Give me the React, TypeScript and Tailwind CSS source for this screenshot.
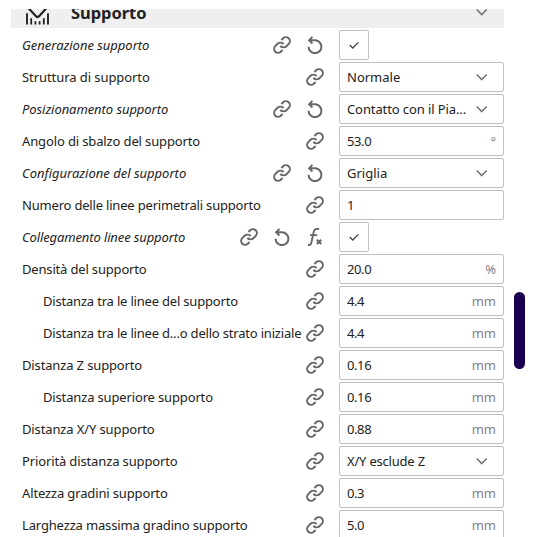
import React from "react";

function LinkIcon() {
  return (
    <svg className="h-[18px] w-[18px] shrink-0" viewBox="0.6 0.6 22.8 22.8" fill="none" stroke="#666" strokeWidth="2.5">
      <path d="M10 13a5 5 0 0 0 7.54.54l3-3a5 5 0 0 0-7.07-7.07l-2.2 2.2" />
      <path d="M14 11a5 5 0 0 0-7.54-.54l-3 3a5 5 0 0 0 7.07 7.07l2.2-2.2" />
    </svg>
  );
}

function ResetIcon() {
  return (
    <svg className="h-[18px] w-[18px] shrink-0" viewBox="0 0 18 18" fill="none" stroke="#666" strokeWidth="2">
      <path d="M2.6 10.7a6.4 6.4 0 1 0 6.4-6.4H3.6" />
      <path d="M6.4.9 3.2 4.2 6.4 7.5" />
    </svg>
  );
}

function FormulaIcon() {
  return (
    <svg className="h-[18px] w-[18px] shrink-0" viewBox="0 0 18 18" fill="none" stroke="#666" strokeWidth="1.9">
      <path d="M2 16.9c1.9.5 2.9-.3 3.4-2.4L7.8 3.6C8.3 1.4 9.8.4 13.2 1.1M4 7.1h7.3" />
      <path d="m10.9 11.7 4.3 4.3m0-4.3L10.9 16" strokeWidth="2.1" />
    </svg>
  );
}

function Chevron() {
  return (
    <svg className="h-[8px] w-[12px] shrink-0" viewBox="0 0 12 8" fill="none" stroke="#757575" strokeWidth="1.6">
      <path d="m.7 1.5 5 5 5-5" />
    </svg>
  );
}

type Row = {
  label: string;
  tracking: string;
  value?: string;
  valueTracking?: string;
  unit?: string;
  kind?: "select" | "check";
  changed?: boolean;
  formula?: boolean;
  child?: boolean;
};

const rows: Row[] = [
  { label: "Generazione supporto", tracking: "tracking-[-0.02px]", kind: "check", changed: true },
  { label: "Struttura di supporto", tracking: "tracking-[-0.07px]", kind: "select", value: "Normale" },
  { label: "Posizionamento supporto", tracking: "tracking-[-0.07px]", kind: "select", value: "Contatto con il Pia...", valueTracking: "tracking-[-0.1px]", changed: true },
  { label: "Angolo di sbalzo del supporto", tracking: "tracking-[-0.13px]", value: "53.0", valueTracking: "tracking-[-0.4px]", unit: "°" },
  { label: "Configurazione del supporto", tracking: "tracking-[0px]", kind: "select", value: "Griglia", changed: true },
  { label: "Numero delle linee perimetrali supporto", tracking: "tracking-[-0.19px]", value: "1" },
  { label: "Collegamento linee supporto", tracking: "tracking-[-0.12px]", kind: "check", changed: true, formula: true },
  { label: "Densità del supporto", tracking: "tracking-[-0.17px]", value: "20.0", valueTracking: "tracking-[-0.4px]", unit: "%" },
  { label: "Distanza tra le linee del supporto", tracking: "tracking-[-0.19px]", value: "4.4", valueTracking: "tracking-[-0.4px]", unit: "mm", child: true },
  { label: "Distanza tra le linee d...o dello strato iniziale", tracking: "tracking-[-0.19px]", value: "4.4", valueTracking: "tracking-[-0.4px]", unit: "mm", child: true },
  { label: "Distanza Z supporto", tracking: "tracking-[-0.14px]", value: "0.16", valueTracking: "tracking-[-0.4px]", unit: "mm" },
  { label: "Distanza superiore supporto", tracking: "tracking-[-0.15px]", value: "0.16", valueTracking: "tracking-[-0.4px]", unit: "mm", child: true },
  { label: "Distanza X/Y supporto", tracking: "tracking-[-0.12px]", value: "0.88", valueTracking: "tracking-[-0.4px]", unit: "mm" },
  { label: "Priorità distanza supporto", tracking: "tracking-[-0.13px]", kind: "select", value: "X/Y esclude Z", valueTracking: "tracking-[-0.2px]" },
  { label: "Altezza gradini supporto", tracking: "tracking-[-0.14px]", value: "0.3", valueTracking: "tracking-[-0.4px]", unit: "mm" },
  { label: "Larghezza massima gradino supporto", tracking: "tracking-[-0.15px]", value: "5.0", valueTracking: "tracking-[-0.4px]", unit: "mm" },
];

function Field({ row }: { row: Row }) {
  if (row.kind === "check") {
    return (
      <div className="flex h-[30px] w-[30px] items-center justify-center rounded-[2px] border border-[#c0c0c0]">
        <svg className="h-[8px] w-[10px]" viewBox="0 0 10 8" fill="none" stroke="#444" strokeWidth="1.3">
          <path d="m.7 4 3 3L9.3 1.4" />
        </svg>
      </div>
    );
  }
  return (
    <div className="flex h-[30px] w-[165px] items-center justify-between rounded-[2px] border border-[#c0c0c0] px-[7px]">
      <span className={row.valueTracking}>{row.value}</span>
      {row.kind === "select" ? (
        <span className="mr-[8px] flex">
          <Chevron />
        </span>
      ) : (
        <span className="text-[#7f7f8c]">{row.unit}</span>
      )}
    </div>
  );
}

export default function App() {
  return (
    <div className="flex h-[537px] w-[535px] overflow-hidden bg-white pl-[11px] pt-[9px] font-['Noto_Sans',sans-serif] text-[13px] leading-[18px] text-[#222]">
      <div className="w-[493px] shrink-0">
        <div className="flex h-[19px] items-end overflow-hidden bg-[#efefef]">
          <svg className="ml-[14px] h-[19px] w-[24px] shrink-0" viewBox="0 0 24 19" fill="none" stroke="#222" strokeWidth="2">
            <path d="M2 4.2v11.3M23 4.2v11.3" strokeWidth="1.9" />
            <path d="M3.2-1.2l8 8.6q1.3 1.2 2.6 0L21.8-1.2" strokeWidth="2.2" />
            <path d="M6.2 9.2v6.3M10.4 12.2v3.3M14.6 12.2v3.3M18.8 9.2v6.3" strokeWidth="1.8" />
          </svg>
          <span className="mb-[3px] ml-[22px] text-[16.5px] font-bold leading-[25px] tracking-[-0.05px]">Supporto</span>
          <span className="mb-[12px] ml-auto mr-[16px] flex">
            <Chevron />
          </span>
        </div>
        <div className="mt-[2px] flex flex-col gap-[2px]">
          {rows.map((row) => (
            <div key={row.label} className="flex h-[30px] shrink-0 items-center">
              <div className={`flex w-[313px] items-center ${row.child ? "pl-[32px]" : "pl-[11px]"}`}>
                <span className={`whitespace-nowrap ${row.tracking} ${row.changed ? "italic" : ""}`}>{row.label}</span>
              </div>
              <div className="-ml-[100px] flex w-[100px] justify-end gap-[15px]">
                <LinkIcon />
                {row.changed && <ResetIcon />}
                {row.formula && <FormulaIcon />}
              </div>
              <div className="ml-[15px]">
                <Field row={row} />
              </div>
            </div>
          ))}
        </div>
      </div>
      <div className="ml-[10px] mt-[283px] h-[77px] w-[11px] rounded-full bg-[#19004f]" />
    </div>
  );
}
